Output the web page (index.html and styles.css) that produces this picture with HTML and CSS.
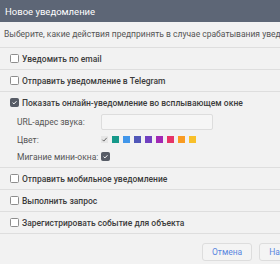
FILE: index.html
```html
<!DOCTYPE html>
<html lang="ru">
<head>
    <meta charset="UTF-8">
    <meta name="viewport" content="width=device-width, initial-scale=1.0">
    <title>Новое уведомление</title>
    <link rel="stylesheet" href="styles.css">
</head>
<body>
    <div class="dialog">
        <header class="dialog-header">Новое уведомление</header>
        <p class="dialog-desc">Выберите, какие действия предпринять в случае срабатывания уведомления:</p>

        <ul class="actions">
            <li class="action">
                <span class="cb"></span>
                <span class="action-label">Уведомить по email</span>
            </li>
            <li class="action">
                <span class="cb"></span>
                <span class="action-label">Отправить уведомление в Telegram</span>
            </li>
            <li class="action action-open">
                <div class="action-line">
                    <span class="cb checked">
                        <svg viewBox="0 0 10 10"><path d="M2.3 5.2 L4.2 7 L7.8 3.2" /></svg>
                    </span>
                    <span class="action-label">Показать онлайн-уведомление во всплывающем окне</span>
                </div>
                <div class="options">
                    <div class="option">
                        <span class="option-label">URL-адрес звука:</span>
                        <input type="text" class="option-input">
                    </div>
                    <div class="option">
                        <span class="option-label">Цвет:</span>
                        <div class="swatches">
                            <span class="swatch swatch-none">
                                <svg viewBox="0 0 10 10"><path d="M2 5.3 L4 7.3 L8.2 2.6" /></svg>
                            </span>
                            <span class="swatch" style="background:#16998a"></span>
                            <span class="swatch" style="background:#4196ea"></span>
                            <span class="swatch" style="background:#5057b8"></span>
                            <span class="swatch" style="background:#7040c0"></span>
                            <span class="swatch" style="background:#a228b4"></span>
                            <span class="swatch" style="background:#e63468"></span>
                            <span class="swatch" style="background:#f99b22"></span>
                            <span class="swatch" style="background:#f8c02a"></span>
                        </div>
                    </div>
                    <div class="option">
                        <span class="option-label">Мигание мини-окна:</span>
                        <span class="cb checked">
                            <svg viewBox="0 0 10 10"><path d="M2.3 5.2 L4.2 7 L7.8 3.2" /></svg>
                        </span>
                    </div>
                </div>
            </li>
            <li class="action">
                <span class="cb"></span>
                <span class="action-label">Отправить мобильное уведомление</span>
            </li>
            <li class="action">
                <span class="cb"></span>
                <span class="action-label">Выполнить запрос</span>
            </li>
            <li class="action">
                <span class="cb"></span>
                <span class="action-label">Зарегистрировать событие для объекта</span>
            </li>
        </ul>

        <footer class="dialog-footer">
            <button class="btn">Отмена</button>
            <button class="btn">Назначить</button>
        </footer>
    </div>
</body>
</html>
```

FILE: styles.css
```css
* {
    margin: 0;
    padding: 0;
    box-sizing: border-box;
}

body {
    font-family: Roboto, 'Liberation Sans', sans-serif;
    background-color: #f2f2f2;
    color: #3a3a3a;
    overflow: hidden;
}

.dialog {
    width: 330px;
    height: 264px;
    background-color: #f2f2f2;
    display: flex;
    flex-direction: column;
}

.dialog-header {
    height: 22px;
    background-color: #5d6676;
    color: #ffffff;
    font-size: 9.5px;
    line-height: 23px;
    padding-left: 5px;
}

.dialog-desc {
    height: 25px;
    line-height: 25px;
    padding-left: 4px;
    font-size: 8.5px;
    color: #555;
    white-space: nowrap;
}

.actions {
    list-style: none;
    border-bottom: 1px solid #dedede;
}

.action {
    display: flex;
    align-items: center;
    height: 22px;
    padding-left: 10px;
    border-top: 1px solid #dedede;
}

.action-open {
    display: block;
    height: 76px;
}

.action-line {
    display: flex;
    align-items: center;
    height: 21px;
}

.action-label {
    font-size: 8.5px;
    font-weight: 500;
    color: #3c3c3c;
    margin-left: 3px;
    white-space: nowrap;
}

.cb {
    width: 9px;
    height: 9px;
    border: 1px solid #8d8d8d;
    border-radius: 1.5px;
    background-color: #ffffff;
    flex-shrink: 0;
    display: flex;
}

.cb.checked {
    background-color: #575c66;
    border-color: #575c66;
}

.cb svg {
    width: 100%;
    height: 100%;
    fill: none;
    stroke: #ffffff;
    stroke-width: 1.4;
}

.options {
    padding-left: 7px;
    display: flex;
    flex-direction: column;
}

.option {
    display: flex;
    align-items: center;
    height: 17px;
}

.option:first-child {
    height: 18px;
}

.option-label {
    width: 84px;
    font-size: 8.5px;
    color: #555;
    white-space: nowrap;
}

.option-input {
    width: 112px;
    height: 16px;
    border: 1px solid #dddddd;
    border-radius: 2px;
    background-color: #f6f6f6;
}

.swatches {
    display: flex;
    gap: 4px;
}

.swatch {
    width: 7px;
    height: 7px;
    display: flex;
}

.swatch-none {
    background-color: #e6e6e6;
}

.swatch-none svg {
    width: 100%;
    height: 100%;
    fill: none;
    stroke: #555;
    stroke-width: 1.3;
}

.dialog-footer {
    flex-grow: 1;
    display: flex;
    justify-content: flex-end;
    align-items: flex-end;
    gap: 7px;
    padding: 0 8px 3px 0;
}

.btn {
    height: 18px;
    padding: 0 9px;
    font-family: inherit;
    font-size: 8.5px;
    color: #5a86e0;
    background-color: #f4f4f4;
    border: 1px solid #dddddd;
    border-radius: 3px;
}
```
